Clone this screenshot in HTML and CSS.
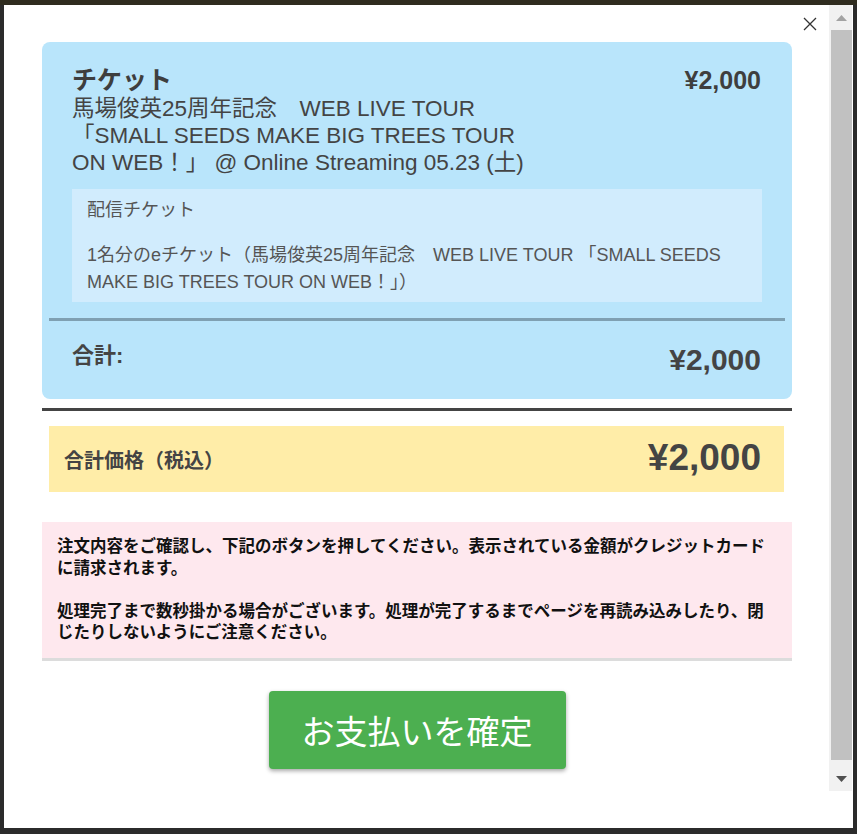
FILE: index.html
```html
<!DOCTYPE html>
<html lang="ja">
<head>
<meta charset="utf-8">
<title>お支払い確認</title>
<link rel="stylesheet" href="styles.css">
</head>
<body>
<div class="modal">
  <button class="close" aria-label="閉じる">
    <svg width="14" height="14" viewBox="0 0 14 14"><path d="M1 1 L13 13 M13 1 L1 13" stroke="#333" stroke-width="1.3" fill="none"/></svg>
  </button>
  <div class="modal-body">
    <div class="scroll">
      <section class="card">
        <div class="item">
          <div class="item-info">
            <h2 class="item-name">チケット</h2>
            <p class="item-title">馬場俊英25周年記念　WEB LIVE TOUR 「SMALL SEEDS MAKE BIG TREES TOUR ON WEB！」 @ Online Streaming 05.23 (土)</p>
          </div>
          <div class="item-price">¥2,000</div>
        </div>
        <div class="desc">
          <p>配信チケット</p>
          <p>1名分のeチケット（馬場俊英25周年記念　WEB LIVE TOUR 「SMALL SEEDS MAKE BIG TREES TOUR ON WEB！」）</p>
        </div>
        <div class="divider"></div>
        <div class="subtotal">
          <span class="subtotal-label">合計:</span>
          <span class="subtotal-price">¥2,000</span>
        </div>
      </section>
      <div class="sep"></div>
      <div class="total">
        <span class="total-label">合計価格（税込）</span>
        <span class="total-price">¥2,000</span>
      </div>
      <div class="notice">
        <p>注文内容をご確認し、下記のボタンを押してください。表示されている金額がクレジットカードに請求されます。</p>
        <p>処理完了まで数秒掛かる場合がございます。処理が完了するまでページを再読み込みしたり、閉じたりしないようにご注意ください。</p>
      </div>
      <div class="actions">
        <button class="pay">お支払いを確定</button>
      </div>
    </div>
    <div class="scrollbar">
      <div class="sb-btn">
        <svg width="11" height="6" viewBox="0 0 11 6"><path d="M0 6 L5.5 0 L11 6 Z" fill="#a3a3a3"/></svg>
      </div>
      <div class="sb-thumb"></div>
      <div class="sb-btn sb-down">
        <svg width="11" height="6" viewBox="0 0 11 6"><path d="M0 0 L11 0 L5.5 6 Z" fill="#505050"/></svg>
      </div>
    </div>
  </div>
</div>
</body>
</html>
```

FILE: styles.css
```css
* { box-sizing: border-box; }

body {
  margin: 0;
  width: 857px;
  height: 834px;
  background: linear-gradient(#2f2c1f 0, #2f2c1f 5px, #2b2b2b 5px);
  font-family: "Liberation Sans", "Noto Sans CJK JP", sans-serif;
  color: #444;
  overflow: hidden;
}

.modal {
  position: absolute;
  left: 4px;
  top: 5px;
  width: 849px;
  height: 823px;
  background: #fff;
}

.close {
  position: absolute;
  left: 799px;
  top: 12px;
  width: 14px;
  height: 14px;
  padding: 0;
  border: 0;
  background: none;
  display: block;
}
.close svg { display: block; }

.modal-body {
  display: flex;
  height: 786px;
  padding-right: 1px;
}

.scroll {
  flex: 1;
  padding: 37px 37px 0 38px;
  overflow: hidden;
}

/* Ticket card */
.card {
  background: #b9e5fb;
  border-radius: 8px;
  padding: 23px 31px 0 30px;
}

.item {
  display: flex;
  justify-content: space-between;
  align-items: flex-start;
}

.item-info { width: 465px; }

.item-name {
  margin: 0;
  font-size: 25px;
  line-height: 30px;
  font-weight: bold;
  color: #3e3e3e;
}

.item-title {
  margin: 0;
  font-size: 22.5px;
  line-height: 27px;
  color: #444;
}

.item-price {
  font-size: 25px;
  line-height: 30px;
  font-weight: bold;
  color: #3e3e3e;
}

.desc {
  margin-top: 13px;
  margin-right: -1px;
  background: #d1ecfd;
  padding: 8px 15px 6px;
  font-size: 18px;
  line-height: 27px;
  color: #555;
}
.desc p { margin: 0; }
.desc p + p { margin-top: 18px; }

.divider {
  height: 3px;
  background: #7fa0b2;
  margin: 16px -24px 0 -23px;
}

.subtotal {
  display: flex;
  justify-content: space-between;
  align-items: flex-start;
  padding: 20px 0 21px;
}

.subtotal-label {
  font-size: 22px;
  line-height: 30px;
  font-weight: bold;
  color: #444;
}

.subtotal-price {
  font-size: 30px;
  line-height: 36px;
  margin-top: 1px;
  font-weight: bold;
  color: #444;
}

.sep {
  height: 3px;
  background: #444;
  margin-top: 9px;
}

/* Total */
.total {
  margin: 15px 8px 0 7px;
  height: 66px;
  background: #ffeda8;
  display: flex;
  justify-content: space-between;
  align-items: center;
  padding: 0 23px 0 15px;
}

.total-label {
  font-size: 20px;
  font-weight: bold;
  color: #444;
}

.total-price {
  font-size: 37px;
  font-weight: bold;
  color: #444;
  margin-top: -2px;
}

/* Notice */
.notice {
  margin-top: 30px;
  background: #fee8ee;
  border-bottom: 3px solid #dcdcdc;
  padding: 14px 15px;
  font-size: 16.5px;
  line-height: 21.6px;
  font-weight: bold;
  color: #111;
}
.notice p { margin: 0; }
.notice p + p { margin-top: 21.6px; }

/* Action */
.actions {
  display: flex;
  justify-content: center;
  margin-top: 30px;
}

.pay {
  width: 297px;
  height: 78px;
  border: 0;
  border-radius: 4px;
  background: #4caf50;
  color: #fff;
  font-family: "Liberation Sans", "Noto Sans CJK JP", sans-serif;
  font-size: 33px;
  box-shadow: 0 2px 4px rgba(0, 0, 0, 0.35);
  padding: 0;
}

/* Scrollbar */
.scrollbar {
  width: 23px;
  background: #f1f1f1;
  display: flex;
  flex-direction: column;
}

.sb-btn {
  height: 25px;
  display: flex;
  align-items: center;
  justify-content: center;
  padding-left: 2px;
}
.sb-btn svg { display: block; }

.sb-thumb {
  height: 730px;
  margin-left: 2px;
  background: #c1c1c1;
}

.sb-down {
  margin-top: 6px;
  padding-top: 1px;
}
```
